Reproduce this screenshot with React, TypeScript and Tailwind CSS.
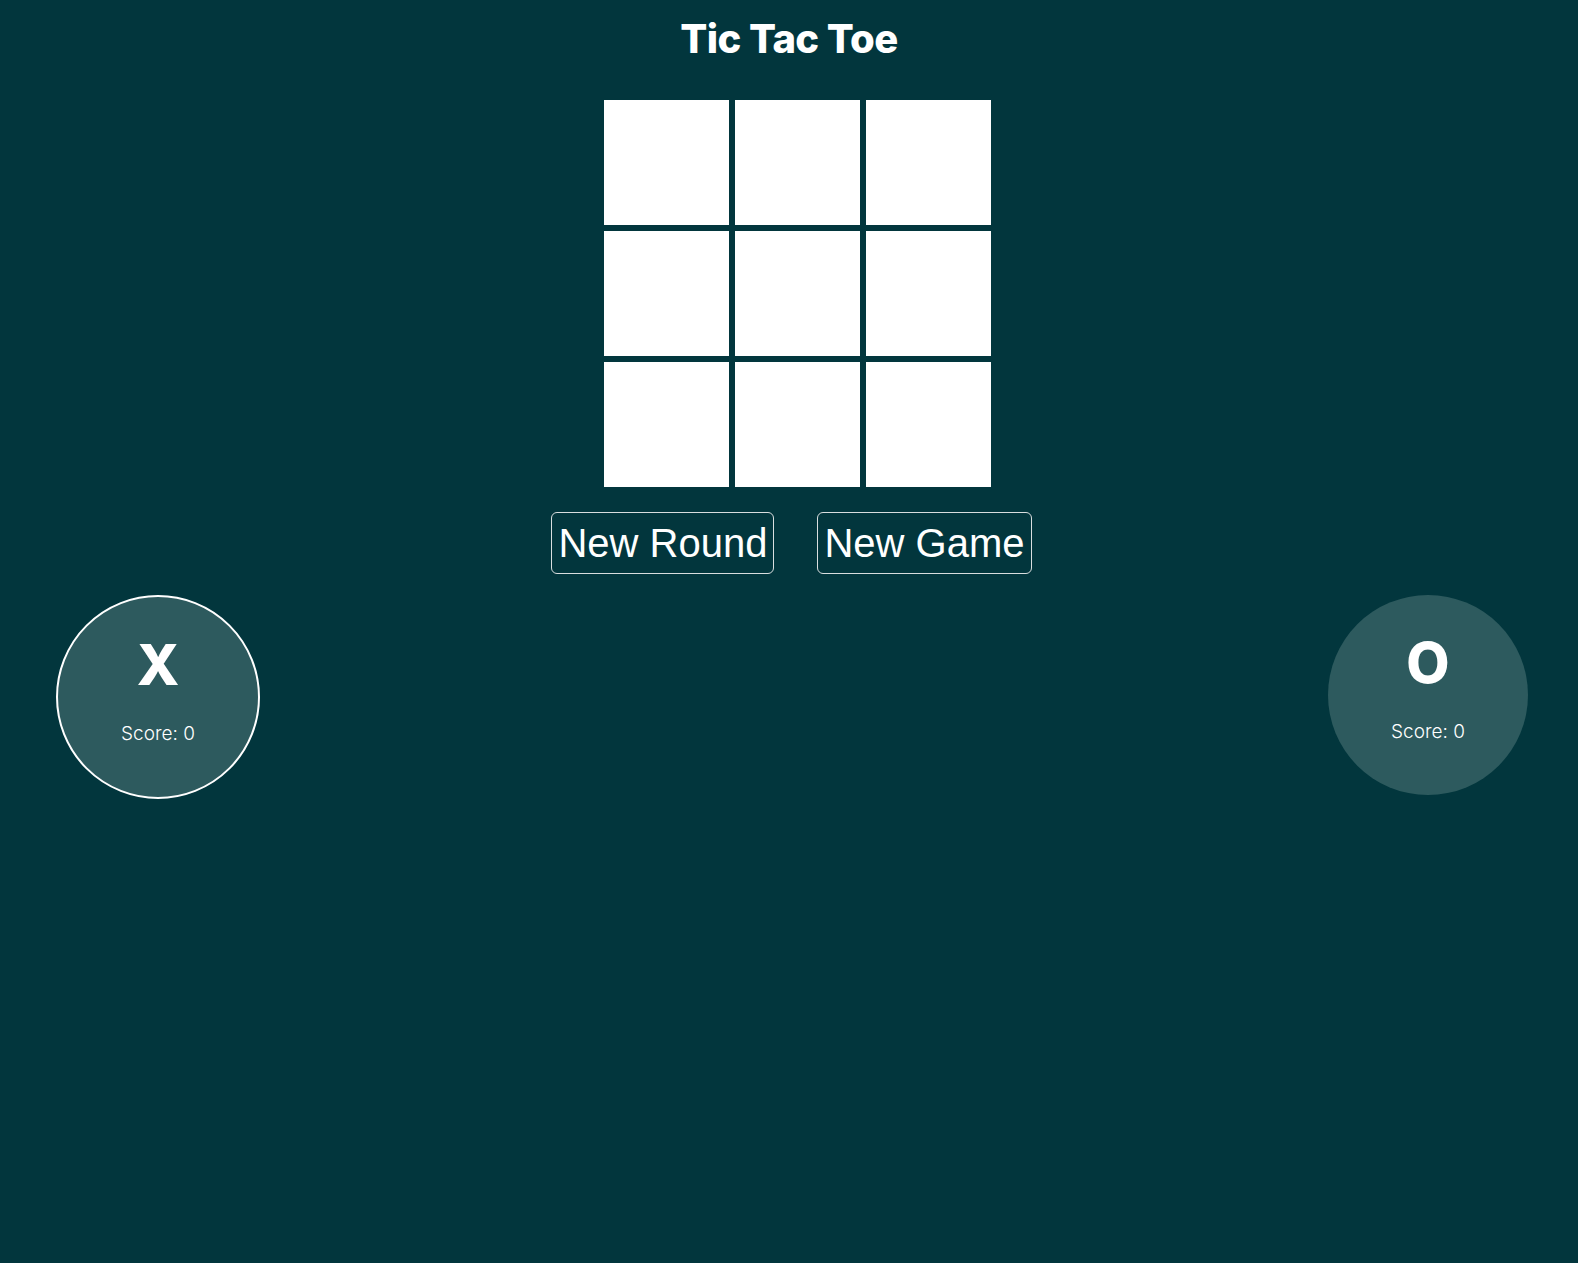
import React, { useState } from 'react'

// board cells, empty at start
const emptyBoard = Array(9).fill('')

export default function App() {
  const [board, setBoard] = useState<string[]>(emptyBoard)
  const [turn, setTurn] = useState<'X' | 'O'>('X')
  const [scores] = useState({ X: 0, O: 0 })

  const play = (i: number) => {
    if (board[i]) return
    const next = [...board]
    next[i] = turn
    setBoard(next)
    setTurn(turn === 'X' ? 'O' : 'X')
  }

  return (
    <div className="min-h-[1263px] w-full bg-[#02363d] text-white" style={{ fontFamily: 'Inter, "Noto Sans", sans-serif' }}>
      {/* Title */}
      <h1 className="pt-[15px] text-center text-[40px] leading-[48px] font-extrabold tracking-[-0.6px]">
        Tic Tac Toe
      </h1>

      {/* Board */}
      <div className="mt-[37px] flex justify-center">
        <div className="ml-[17px] grid grid-cols-[repeat(3,125px)] grid-rows-[repeat(3,125px)] gap-[6px]">
          {board.map((cell, i) => (
            <button
              key={i}
              onClick={() => play(i)}
              className="bg-white text-[#02363d] text-6xl font-extrabold"
            >
              {cell}
            </button>
          ))}
        </div>
      </div>

      {/* Controls */}
      <div className="mt-[25px] ml-[5px] flex justify-center gap-[43px]" style={{ fontFamily: '"Liberation Sans", Arial, sans-serif' }}>
        <button
          onClick={() => setBoard(emptyBoard)}
          className="rounded-[6px] border border-[#d9dedf] px-[6px] py-[7px] text-[40px] leading-[46px] text-white"
        >
          New Round
        </button>
        <button
          onClick={() => { setBoard(emptyBoard); setTurn('X') }}
          className="rounded-[6px] border border-[#d9dedf] px-[6px] py-[7px] text-[40px] leading-[46px] text-white"
        >
          New Game
        </button>
      </div>

      {/* Players */}
      <div className="mt-[21px] flex items-start justify-between pl-[56px] pr-[50px]">
        <div
          className={`box-content flex h-[200px] w-[200px] flex-col items-center rounded-full bg-[#2d5a5e] ${
            turn === 'X' ? 'border-2 border-white' : ''
          }`}
        >
          <span className="mt-[34px] text-[56px] leading-[68px] font-extrabold">X</span>
          <span className="mt-[23px] text-[19px] leading-[24px] font-light">Score: {scores.X}</span>
        </div>
        <div
          className={`box-content flex h-[200px] w-[200px] flex-col items-center rounded-full bg-[#2d5a5e] ${
            turn === 'O' ? 'border-2 border-white' : ''
          }`}
        >
          <span className="mt-[34px] text-[56px] leading-[68px] font-extrabold">O</span>
          <span className="mt-[23px] text-[19px] leading-[24px] font-light">Score: {scores.O}</span>
        </div>
      </div>
    </div>
  )
}
